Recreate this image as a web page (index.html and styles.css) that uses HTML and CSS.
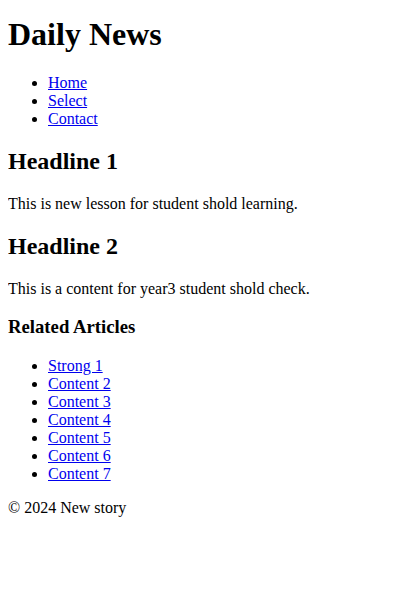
FILE: index.html
```html
<!DOCTYPE html>
<html>
<head>
<meta charset="utf-8">
<title>Daily News</title>
<link rel="stylesheet" href="styles.css">
</head>
<body class="page">
<header>
<h1 class="title">Daily News</h1>
<nav>
<ul>
<li><a href="#">Home</a></li>
<li><a href="#">Select</a></li>
<li><a href="#">Contact</a></li>
</ul>
</nav>
</header>
<main>
<article>
<h2>Headline 1</h2>
<p>This is new lesson for student shold learning.</p>
</article>
<article>
<h2>Headline 2</h2>
<p>This is a content for year3 student shold check.</p>
</article>
<aside>
<h3>Related Articles</h3>
<ul>
<li><a href="#">Strong 1</a></li>
<li><a href="#">Content 2</a></li>
<li><a href="#">Content 3</a></li>
<li><a href="#">Content 4</a></li>
<li><a href="#">Content 5</a></li>
<li><a href="#">Content 6</a></li>
<li><a href="#">Content 7</a></li>
</ul>
</aside>
</main>
<footer>
<p>&copy; 2024 New story</p>
</footer>
</body>
</html>
```
FILE: styles.css
```css
.page {
  font-family: "Liberation Serif", "Times New Roman", serif;
  color: #000;
  background: #fff;
}

.title {
  margin-top: 7.5px;
}
```
